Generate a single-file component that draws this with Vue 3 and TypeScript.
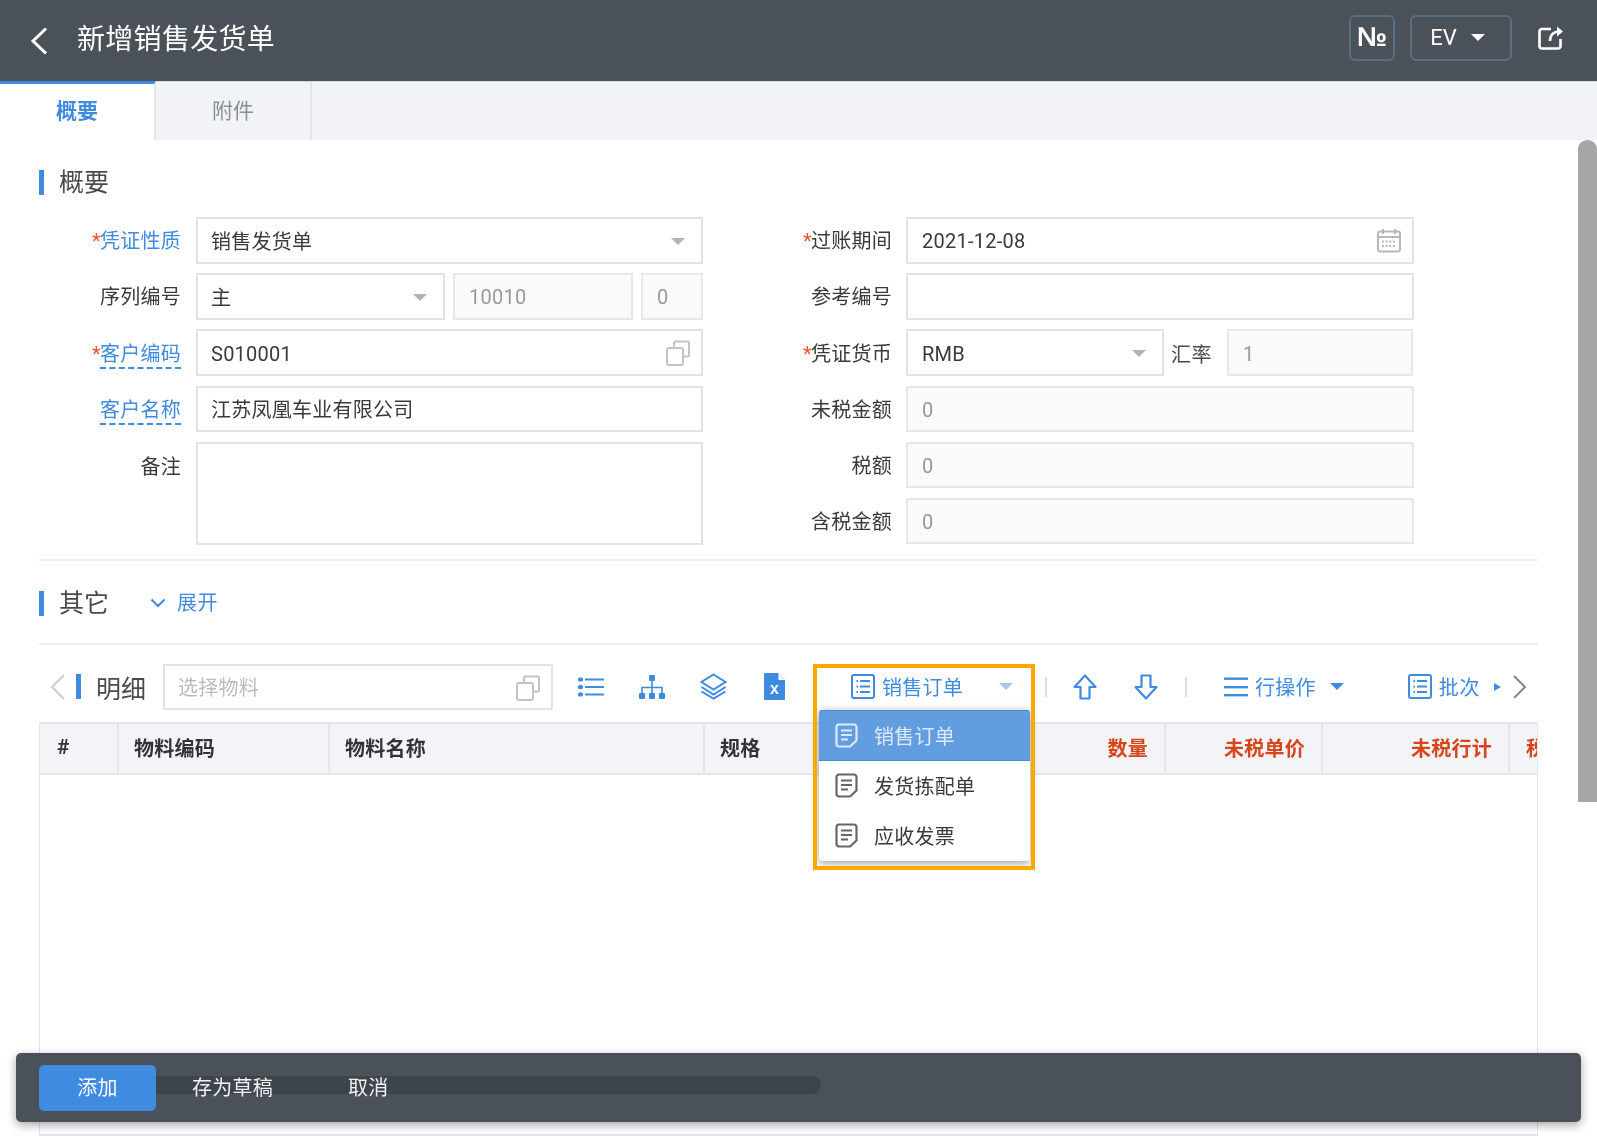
<script setup lang="ts">
// 新增销售发货单 - form page with dropdown open on the 销售订单 toolbar button
const menuItems = ['销售订单', '发货拣配单', '应收发票']

const columns = [
  { title: '#', width: 79 },
  { title: '物料编码', width: 211 },
  { title: '物料名称', width: 375 },
  { title: '规格', width: 300 },
  { title: '数量', width: 161, red: true },
  { title: '未税单价', width: 157, red: true },
  { title: '未税行计', width: 187, red: true },
]
</script>

<template>
  <div class="page">
    <header class="topbar">
      <svg class="back" width="18" height="28" viewBox="0 0 18 28"><path d="M16 1.500 3 14l13 12.500" fill="none" stroke="#fff" stroke-width="3" /></svg>
      <h1 class="title">新增销售发货单</h1>
      <div class="top-actions">
        <button class="top-btn num">№</button>
        <button class="top-btn ev">EV<i class="caret white"></i></button>
        <svg class="share" width="28" height="28" viewBox="0 0 28 28" fill="none" stroke="#fff" stroke-width="2.600">
          <path d="M14 5H5a2.500 2.500 0 0 0-2.500 2.500V22A2.500 2.500 0 0 0 5 24.500h16a2.500 2.500 0 0 0 2.500-2.500v-7" />
          <path d="M13 17c0-6 3.500-9.500 10-9.500" />
          <path d="M20 2.500 26 7.500l-6 5" fill="#fff" stroke="none" />
        </svg>
      </div>
    </header>

    <nav class="tabs">
      <div class="tab active">概要</div>
      <div class="tab">附件</div>
    </nav>

    <main class="content">
      <div class="section-title first"><i class="bar"></i>概要</div>

      <div class="form">
        <div class="form-col left">
          <div class="row">
            <label class="lbl link"><em>*</em>凭证性质</label>
            <div class="field"><span>销售发货单</span><i class="caret gray"></i></div>
          </div>
          <div class="row">
            <label class="lbl">序列编号</label>
            <div class="field w-serial"><span>主</span><i class="caret gray"></i></div>
            <div class="field off w-no"><span class="en">10010</span></div>
            <div class="field off w-zero"><span class="en">0</span></div>
          </div>
          <div class="row">
            <label class="lbl link"><em>*</em><u>客户编码</u></label>
            <div class="field">
              <span class="en">S010001</span>
              <svg class="copy" width="26" height="26" viewBox="0 0 26 26" fill="none" stroke="#c4c4c4" stroke-width="2"><path d="M9 7V3a1.500 1.500 0 0 1 1.500-1.500h12A1.500 1.500 0 0 1 24 3v12a1.500 1.500 0 0 1-1.500 1.500H18" /><rect x="2" y="8" width="16" height="17" rx="2" /></svg>
            </div>
          </div>
          <div class="row">
            <label class="lbl link"><u>客户名称</u></label>
            <div class="field"><span>江苏凤凰车业有限公司</span></div>
          </div>
          <div class="row tall">
            <label class="lbl">备注</label>
            <div class="field area"></div>
          </div>
        </div>

        <div class="form-col right">
          <div class="row">
            <label class="lbl"><em>*</em>过账期间</label>
            <div class="field">
              <span class="en">2021-12-08</span>
              <svg class="cal" width="24" height="25" viewBox="0 0 24 25" fill="none" stroke="#b8b8b8" stroke-width="2"><rect x="1" y="3.500" width="22" height="20" rx="2" /><path d="M1 9h22M6 1v5M18 1v5" /><path d="M5 13.500h14M5 18h14" stroke-width="2" stroke-dasharray="2 1.600" /></svg>
            </div>
          </div>
          <div class="row">
            <label class="lbl">参考编号</label>
            <div class="field"></div>
          </div>
          <div class="row">
            <label class="lbl"><em>*</em>凭证货币</label>
            <div class="field w-cur"><span class="en">RMB</span><i class="caret gray"></i></div>
            <span class="rate">汇率</span>
            <div class="field off w-rate"><span class="en">1</span></div>
          </div>
          <div class="row">
            <label class="lbl">未税金额</label>
            <div class="field off"><span class="en">0</span></div>
          </div>
          <div class="row">
            <label class="lbl">税额</label>
            <div class="field off"><span class="en">0</span></div>
          </div>
          <div class="row">
            <label class="lbl">含税金额</label>
            <div class="field off"><span class="en">0</span></div>
          </div>
        </div>
      </div>

      <hr class="divider first-div" />

      <div class="section-title">
        <i class="bar"></i>其它
        <span class="expand">
          <svg width="16" height="10" viewBox="0 0 16 10"><path d="M1.500 1.500 8 8l6.500-6.500" fill="none" stroke="#3f8be0" stroke-width="2" /></svg>
          展开
        </span>
      </div>

      <hr class="divider second-div" />

      <div class="toolbar">
        <svg class="tb-prev" width="15" height="26" viewBox="0 0 15 26"><path d="M14 1 2 13l12 12" fill="none" stroke="#ccc" stroke-width="2" /></svg>
        <i class="bar tb-bar"></i>
        <span class="tb-name">明细</span>
        <div class="field tb-field">
          <span class="hint">选择物料</span>
          <svg class="copy" width="26" height="26" viewBox="0 0 26 26" fill="none" stroke="#c4c4c4" stroke-width="2"><path d="M9 7V3a1.500 1.500 0 0 1 1.500-1.500h12A1.500 1.500 0 0 1 24 3v12a1.500 1.500 0 0 1-1.500 1.500H18" /><rect x="2" y="8" width="16" height="17" rx="2" /></svg>
        </div>

        <svg class="ti list" width="26" height="20" viewBox="0 0 26 20" fill="#3f8be0">
          <rect x="0" y="0.500" width="5" height="4" rx="1.500" /><rect x="0" y="8" width="5" height="4" rx="1.500" /><rect x="0" y="15.500" width="5" height="4" rx="1.500" />
          <rect x="7" y="1.500" width="19" height="2" /><rect x="7" y="9" width="19" height="2" /><rect x="7" y="16.500" width="19" height="2" />
        </svg>
        <svg class="ti tree" width="26" height="24" viewBox="0 0 26 24" fill="#3f8be0">
          <rect x="10" y="0" width="6" height="6" rx="1" /><rect x="0" y="18" width="6" height="6" rx="1" /><rect x="10" y="18" width="6" height="6" rx="1" /><rect x="20" y="18" width="6" height="6" rx="1" />
          <path d="M13 6v12M3 18v-5.500h20V18" fill="none" stroke="#3f8be0" stroke-width="1.600" />
        </svg>
        <svg class="ti layers" width="27" height="27" viewBox="0 0 27 27" fill="none" stroke="#3f8be0" stroke-width="2">
          <path d="M13.500 1.500 25.500 9l-12 7.500L1.500 9z" /><path d="M1.500 14l12 7.500 12-7.500" /><path d="M1.500 18.500l12 7 12-7" />
        </svg>
        <svg class="ti excel" width="21" height="27" viewBox="0 0 21 27">
          <path d="M1 0h13l7 7v19a1 1 0 0 1-1 1H1a1 1 0 0 1-1-1V1a1 1 0 0 1 1-1z" fill="#3f8be0" />
          <path d="M14.500 0.500v6.500H21" fill="#fff" />
          <text x="10.500" y="21" text-anchor="middle" class="xl">x</text>
        </svg>

        <button class="tb-btn orders">
          <svg width="24" height="25" viewBox="0 0 24 25" fill="none" stroke="#3f8be0" stroke-width="2"><rect x="1" y="1" width="22" height="23" rx="2" /><path d="M5.500 7h1.500M9 7h10M5.500 12.500h1.500M9 12.500h10M5.500 18h1.500M9 18h10" /></svg>
          <span>销售订单</span>
          <i class="caret pale"></i>
        </button>
        <i class="sep sep-a"></i>
        <svg class="ti up" width="24" height="26" viewBox="0 0 24 26" fill="none" stroke="#3f8be0" stroke-width="2.200" stroke-linejoin="round"><path d="M12 1.500 22.500 13H16.500v11.500h-9V13H1.500z" /></svg>
        <svg class="ti down" width="24" height="26" viewBox="0 0 24 26" fill="none" stroke="#3f8be0" stroke-width="2.200" stroke-linejoin="round"><path d="M12 24.500 22.500 13H16.500V1.500h-9V13H1.500z" /></svg>
        <i class="sep sep-b"></i>
        <button class="tb-btn rowop">
          <svg width="24" height="20" viewBox="0 0 24 20" fill="#3f8be0"><rect y="0.500" width="24" height="2.400" /><rect y="9" width="24" height="2.400" /><rect y="17" width="24" height="2.400" /></svg>
          <span>行操作</span>
          <i class="caret blue"></i>
        </button>
        <button class="tb-btn batch">
          <svg width="24" height="25" viewBox="0 0 24 25" fill="none" stroke="#3f8be0" stroke-width="2"><rect x="1" y="1" width="22" height="23" rx="2" /><path d="M5.500 7h1.500M9 7h10M5.500 12.500h1.500M9 12.500h10M5.500 18h1.500M9 18h10" /></svg>
          <span>批次</span>
          <i class="caret-half"></i>
        </button>
        <svg class="tb-next" width="14" height="24" viewBox="0 0 14 24"><path d="M1 1l11 11L1 23" fill="none" stroke="#888" stroke-width="2" /></svg>
      </div>

      <div class="grid">
        <div class="grid-head">
          <div
            v-for="col in columns"
            :key="col.title"
            class="th"
            :class="{ red: col.red }"
            :style="{ width: col.width + 'px' }"
          >
            {{ col.title }}
          </div>
          <div class="th tail">税额</div>
        </div>
        <div class="grid-body">
          <div class="hscroll"></div>
        </div>
      </div>
    </main>

    <div class="vscroll"></div>

    <div class="menu">
      <div v-for="(item, i) in menuItems" :key="item" class="menu-item" :class="{ on: i === 0 }">
        <svg width="23" height="25" viewBox="0 0 23 25" fill="none" stroke="currentColor" stroke-width="2.200" stroke-linejoin="round">
          <path d="M4 1.500h15a2.500 2.500 0 0 1 2.500 2.500v13.500L15 23.500H4A2.500 2.500 0 0 1 1.500 21V4A2.500 2.500 0 0 1 4 1.500z" />
          <path d="M6 7.500h11M6 12h11M6 16.500h7" stroke-width="1.800" />
        </svg>
        <span>{{ item }}</span>
      </div>
    </div>
    <div class="annotation"></div>

    <footer class="actions">
      <button class="primary">添加</button>
      <button class="plain draft">存为草稿</button>
      <button class="plain cancel">取消</button>
    </footer>
  </div>
</template>

<style>
html,
body {
  margin: 0;
  background: #fff;
}
</style>

<style scoped>
.page {
  position: relative;
  width: 1597px;
  height: 1137px;
  overflow: hidden;
  display: flex;
  flex-direction: column;
  font-family: Roboto, "Noto Sans CJK SC", sans-serif;
  font-size: 20px;
  color: #3a3a3a;
  background: #fff;
  filter: blur(0.6px);
}

button {
  font-family: inherit;
  padding: 0;
  border: 0;
  background: none;
  cursor: pointer;
}

/* header */
.topbar {
  flex: 0 0 81px;
  display: flex;
  align-items: center;
  background: #4a5159;
  color: #fff;
  padding-left: 30px;
}
.back {
  margin-right: 29px;
}
.title {
  margin: 0;
  font-size: 28px;
  font-weight: 400;
  line-height: 1;
  letter-spacing: 0.3px;
  position: relative;
  top: -1px;
}
.top-actions {
  margin-left: auto;
  display: flex;
  align-items: center;
  padding-right: 32px;
  position: relative;
  top: -3px;
}
.top-btn {
  height: 46px;
  border: 2px solid #5b6f82;
  border-radius: 6px;
  color: #fff;
  box-sizing: border-box;
  display: flex;
  align-items: center;
  justify-content: center;
}
.num {
  width: 46px;
  font-size: 27px;
  font-weight: 700;
  font-family: "Liberation Sans", sans-serif;
}
.ev {
  width: 102px;
  margin-left: 15px;
  font-size: 22px;
  gap: 14px;
  padding-right: 7px;
}
.share {
  margin-left: 25px;
}

/* carets */
.caret {
  width: 0;
  height: 0;
  border-left: 7px solid transparent;
  border-right: 7px solid transparent;
  border-top: 7px solid #fff;
}
.caret.gray {
  position: absolute;
  right: 16px;
  top: 19px;
  border-top-color: #b3b3b3;
}
.caret.pale {
  border-top-color: #a4c8f0;
}
.caret.blue {
  border-top-color: #3f8be0;
}
.caret-half {
  width: 0;
  height: 0;
  border-top: 4px solid transparent;
  border-bottom: 4px solid transparent;
  border-left: 7px solid #3f8be0;
}

/* tabs */
.tabs {
  flex: 0 0 59px;
  display: flex;
  background: #f1f3f7;
  border-top: 1px solid #d6d9de;
  box-sizing: border-box;
}
.tab {
  width: 156px;
  box-sizing: border-box;
  border-right: 2px solid #e3e5ea;
  display: flex;
  align-items: center;
  justify-content: center;
  font-size: 21px;
  color: #8a8f96;
  padding-bottom: 4px;
}
.tab.active {
  background: #fff;
  color: #3f8be0;
  font-weight: 700;
  border-top: 3px solid #3f8be0;
  margin-top: -1px;
  padding-bottom: 6px;
}

/* body */
.content {
  flex: 1;
  min-height: 0;
  display: flex;
  flex-direction: column;
  padding: 30px 59px 1px 39px;
  position: relative;
}
.section-title {
  display: flex;
  align-items: center;
  height: 25px;
  font-size: 25px;
  color: #4a4a4a;
  line-height: 25px;
}
.bar {
  width: 5px;
  height: 25px;
  background: #3f8be0;
  margin-right: 15px;
  flex: none;
}
.expand {
  display: flex;
  align-items: center;
  gap: 11px;
  margin-left: 41px;
  font-size: 20px;
  letter-spacing: 0.5px;
  color: #3f8be0;
}

/* form */
.form {
  display: flex;
  margin-top: 22px;
}
.form-col {
  display: flex;
  flex-direction: column;
  gap: 9.7px;
}
.form-col.left {
  width: 664px;
}
.form-col.right {
  width: 664px;
  margin-left: 47px;
}
.row {
  height: 46.5px;
  display: flex;
  align-items: center;
}
.row.tall {
  height: 103px;
  align-items: flex-start;
}
.lbl {
  width: 142px;
  margin-right: 15px;
  padding-top: 2px;
  flex: none;
  text-align: right;
  line-height: 26px;
  letter-spacing: 0.25px;
  color: #3a3a3a;
}
.row.tall .lbl {
  margin-top: 10px;
}
.form-col.right .lbl {
  margin-right: 14px;
}
.lbl em {
  color: #f5502a;
  font-style: normal;
  letter-spacing: -1.5px;
  margin-right: 1px;
}
.lbl.link {
  color: #3f8be0;
}
.lbl u {
  text-decoration: none;
  border-bottom: 2px dashed #3f8be0;
  padding-bottom: 1px;
}
.field {
  position: relative;
  flex: 1;
  height: 100%;
  box-sizing: border-box;
  border: 2px solid #e2e2e2;
  display: flex;
  align-items: center;
  padding-left: 13px;
  background: #fff;
  min-width: 0;
  letter-spacing: 0.25px;
}
.en {
  padding-top: 2px;
}
.form-col.right .field,
.field.off {
  padding-left: 14px;
}
.field.off {
  background: #fafafa;
  color: #999;
  border-color: #e8e8e8;
}
.field.area {
  height: 100%;
}
.w-serial {
  flex: 0 0 249px;
}
.w-no {
  flex: 0 0 180px;
  margin-left: 8px;
}
.w-zero {
  flex: 0 0 62px;
  margin-left: 8px;
}
.w-cur {
  flex: 0 0 258px;
}
.rate {
  width: 42px;
  margin-left: 7px;
  padding-top: 2px;
  letter-spacing: 0.5px;
  color: #4a4a4a;
}
.w-rate {
  flex: 0 0 186px;
  margin-left: 14px;
}
.copy {
  position: absolute;
  right: 10px;
  top: 9px;
}
.cal {
  position: absolute;
  right: 11px;
  top: 9px;
}
.divider {
  margin: 0;
  border: 0;
  height: 2px;
  background: #eee;
  flex: none;
}
.first-div {
  margin-top: 14px;
  margin-bottom: 30px;
}
.second-div {
  margin-top: 27px;
}

/* toolbar */
.toolbar {
  display: flex;
  align-items: center;
  height: 46px;
  margin-top: 19px;
  flex: none;
}
.tb-prev {
  margin-left: 11px;
}
.tb-bar {
  margin-left: 11px;
  margin-right: 15px;
}
.tb-name {
  font-size: 25px;
  width: 50px;
  color: #4a4a4a;
}
.tb-field {
  flex: 0 0 390px;
  margin-left: 17px;
}
.hint {
  color: #bbb;
}
.ti {
  flex: none;
}
.list {
  margin-left: 25px;
}
.tree {
  margin-left: 35px;
}
.layers {
  margin-left: 35px;
}
.excel {
  margin-left: 37px;
}
.xl {
  fill: #fff;
  font-size: 16px;
  font-weight: 700;
  font-family: "Liberation Sans", sans-serif;
}
.tb-btn {
  display: flex;
  align-items: center;
  font-size: 20px;
  letter-spacing: 0.25px;
  color: #3f8be0;
  flex: none;
}
.tb-btn span {
  margin-left: 7px;
}
.orders {
  margin-left: 66px;
}
.orders .caret {
  margin-left: 36px;
}
.sep {
  width: 2px;
  height: 20px;
  background: #ddd;
  flex: none;
}
.sep-a {
  margin-left: 32px;
}
.up {
  margin-left: 26px;
}
.down {
  margin-left: 37px;
}
.sep-b {
  margin-left: 27px;
}
.rowop {
  margin-left: 37px;
}
.rowop .caret {
  margin-left: 14px;
}
.batch {
  margin-left: 64px;
}
.batch span {
  margin-left: 7px;
  letter-spacing: 0.8px;
}
.batch .caret-half {
  margin-left: 14px;
}
.tb-next {
  margin-left: 12px;
  flex: none;
}

/* table */
.grid {
  margin-top: 12px;
  flex: 1;
  min-height: 0;
  display: flex;
  flex-direction: column;
  border: 1px solid #e3e6ec;
  border-top: 0;
  border-bottom-width: 2px;
  overflow: hidden;
}
.grid-head {
  display: flex;
  flex: 0 0 53px;
  box-sizing: border-box;
  background: #f2f4f8;
  border-top: 2px solid #e3e6ec;
  border-bottom: 2px solid #e3e6ec;
}
.th {
  flex: none;
  box-sizing: border-box;
  border-right: 2px solid #e3e6ec;
  padding: 0 16px 2px 15px;
  display: flex;
  align-items: center;
  font-weight: 700;
  letter-spacing: 0.25px;
  color: #333;
}
.th:first-child {
  padding-left: 17px;
  font-size: 21px;
}
.th.red {
  color: #d9451a;
  justify-content: flex-end;
}
.th.tail {
  flex: 0 0 100px;
  padding-left: 16px;
  white-space: nowrap;
  border-right: 0;
  color: #d9451a;
}
.grid-body {
  flex: 1;
  position: relative;
}
.hscroll {
  position: absolute;
  left: 0;
  bottom: 40px;
  width: 781px;
  height: 18px;
  border-radius: 9px;
  background: #777;
}

/* right page scrollbar */
.vscroll {
  position: absolute;
  left: 1578px;
  top: 140px;
  width: 19px;
  height: 662px;
  background: #a6a6a6;
  border-radius: 9px 9px 0 0;
}

/* open dropdown */
.menu {
  position: absolute;
  left: 819px;
  top: 710px;
  width: 211px;
  height: 151px;
  background: #fff;
  border-radius: 3px;
  box-shadow: 0 2px 8px rgba(0, 0, 0, 0.4);
  overflow: hidden;
  letter-spacing: 0.25px;
}
.menu-item {
  height: 50px;
  display: flex;
  align-items: center;
  padding-left: 16px;
  padding-bottom: 2px;
  box-sizing: border-box;
  gap: 16px;
  color: #666;
}
.menu-item span {
  color: #3a3a3a;
}
.menu-item.on {
  background: #629edf;
  color: #dbe9f8;
  height: 51px;
  padding-bottom: 0;
  border-top: 1px solid #4a8ad6;
  border-bottom: 1px solid #4a8ad6;
}
.menu-item.on span {
  color: #dbe9f8;
}
.annotation {
  position: absolute;
  left: 813px;
  top: 664px;
  width: 222px;
  height: 206px;
  box-sizing: border-box;
  border: 4px solid #ffa800;
  pointer-events: none;
}

/* bottom action bar */
.actions {
  position: absolute;
  left: 16px;
  top: 1053px;
  width: 1565px;
  height: 69px;
  box-sizing: border-box;
  display: flex;
  align-items: center;
  background: rgba(54, 62, 71, 0.9);
  border-radius: 5px;
  box-shadow: 0 3px 10px rgba(0, 0, 0, 0.35);
  padding-left: 23px;
}
.primary {
  width: 117px;
  height: 46px;
  border-radius: 5px;
  background: #3f8be0;
  color: #fff;
  font-size: 20px;
  letter-spacing: 0.25px;
  padding-bottom: 2px;
}
.plain {
  color: #f0f0f0;
  font-size: 20px;
  letter-spacing: 0.25px;
  padding-bottom: 2px;
}
.draft {
  margin-left: 36px;
}
.cancel {
  margin-left: 75px;
}
</style>
